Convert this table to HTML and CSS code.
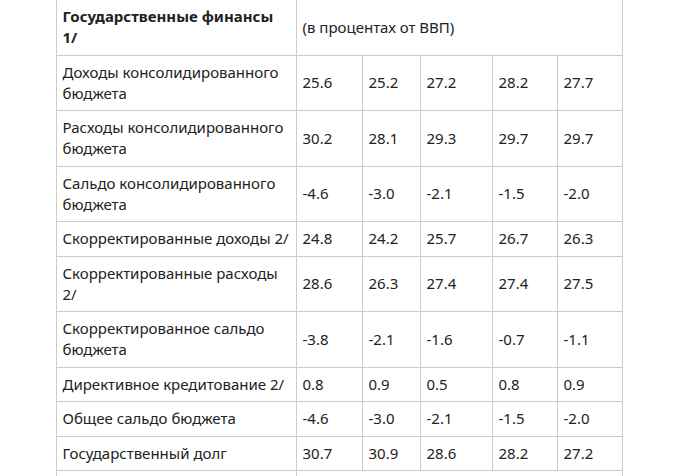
FILE: index.html
```html
<!DOCTYPE html>
<html lang="ru">
<head>
<meta charset="utf-8">
<link rel="stylesheet" href="styles.css">
</head>
<body>
<table class="data">
  <colgroup>
    <col class="c-label">
    <col class="c1">
    <col class="c2">
    <col class="c3">
    <col class="c4">
    <col class="c5">
  </colgroup>
  <tr>
    <th>Государственные финансы 1/</th>
    <td colspan="5">(в процентах от ВВП)</td>
  </tr>
  <tr><td>Доходы консолидированного бюджета</td><td>25.6</td><td>25.2</td><td>27.2</td><td>28.2</td><td>27.7</td></tr>
  <tr><td>Расходы консолидированного бюджета</td><td>30.2</td><td>28.1</td><td>29.3</td><td>29.7</td><td>29.7</td></tr>
  <tr><td>Сальдо консолидированного бюджета</td><td>-4.6</td><td>-3.0</td><td>-2.1</td><td>-1.5</td><td>-2.0</td></tr>
  <tr><td>Скорректированные доходы 2/</td><td>24.8</td><td>24.2</td><td>25.7</td><td>26.7</td><td>26.3</td></tr>
  <tr><td>Скорректированные расходы 2/</td><td>28.6</td><td>26.3</td><td>27.4</td><td>27.4</td><td>27.5</td></tr>
  <tr><td>Скорректированное сальдо бюджета</td><td>-3.8</td><td>-2.1</td><td>-1.6</td><td>-0.7</td><td>-1.1</td></tr>
  <tr><td>Директивное кредитование 2/</td><td>0.8</td><td>0.9</td><td>0.5</td><td>0.8</td><td>0.9</td></tr>
  <tr><td>Общее сальдо бюджета</td><td>-4.6</td><td>-3.0</td><td>-2.1</td><td>-1.5</td><td>-2.0</td></tr>
  <tr><td>Государственный долг</td><td>30.7</td><td>30.9</td><td>28.6</td><td>28.2</td><td>27.2</td></tr>
  <tr class="row-empty">
    <td></td>
    <td colspan="5"></td>
  </tr>
</table>
</body>
</html>
```

FILE: styles.css
```css
html, body {
  margin: 0;
  padding: 0;
  background: #ffffff;
}
body {
  font-family: "Noto Sans", "Open Sans", sans-serif;
  font-size: 15px;
  line-height: 21px;
  color: #222222;
  overflow: hidden;
}
.data {
  border-collapse: collapse;
  table-layout: fixed;
  width: 567px;
  margin: -1px 0 0 55.5px;
}
.c-label { width: 240px; }
.c1 { width: 66px; }
.c2 { width: 58px; }
.c3 { width: 72px; }
.c4 { width: 65px; }
.c5 { width: 65px; }
.data th,
.data td {
  border: 1px solid #cccccc;
  padding: 6.25px 6px;
  text-align: left;
  vertical-align: middle;
  font-weight: 400;
}
.data th {
  font-weight: 700;
}
.row-empty td {
  height: 21px;
}
```
